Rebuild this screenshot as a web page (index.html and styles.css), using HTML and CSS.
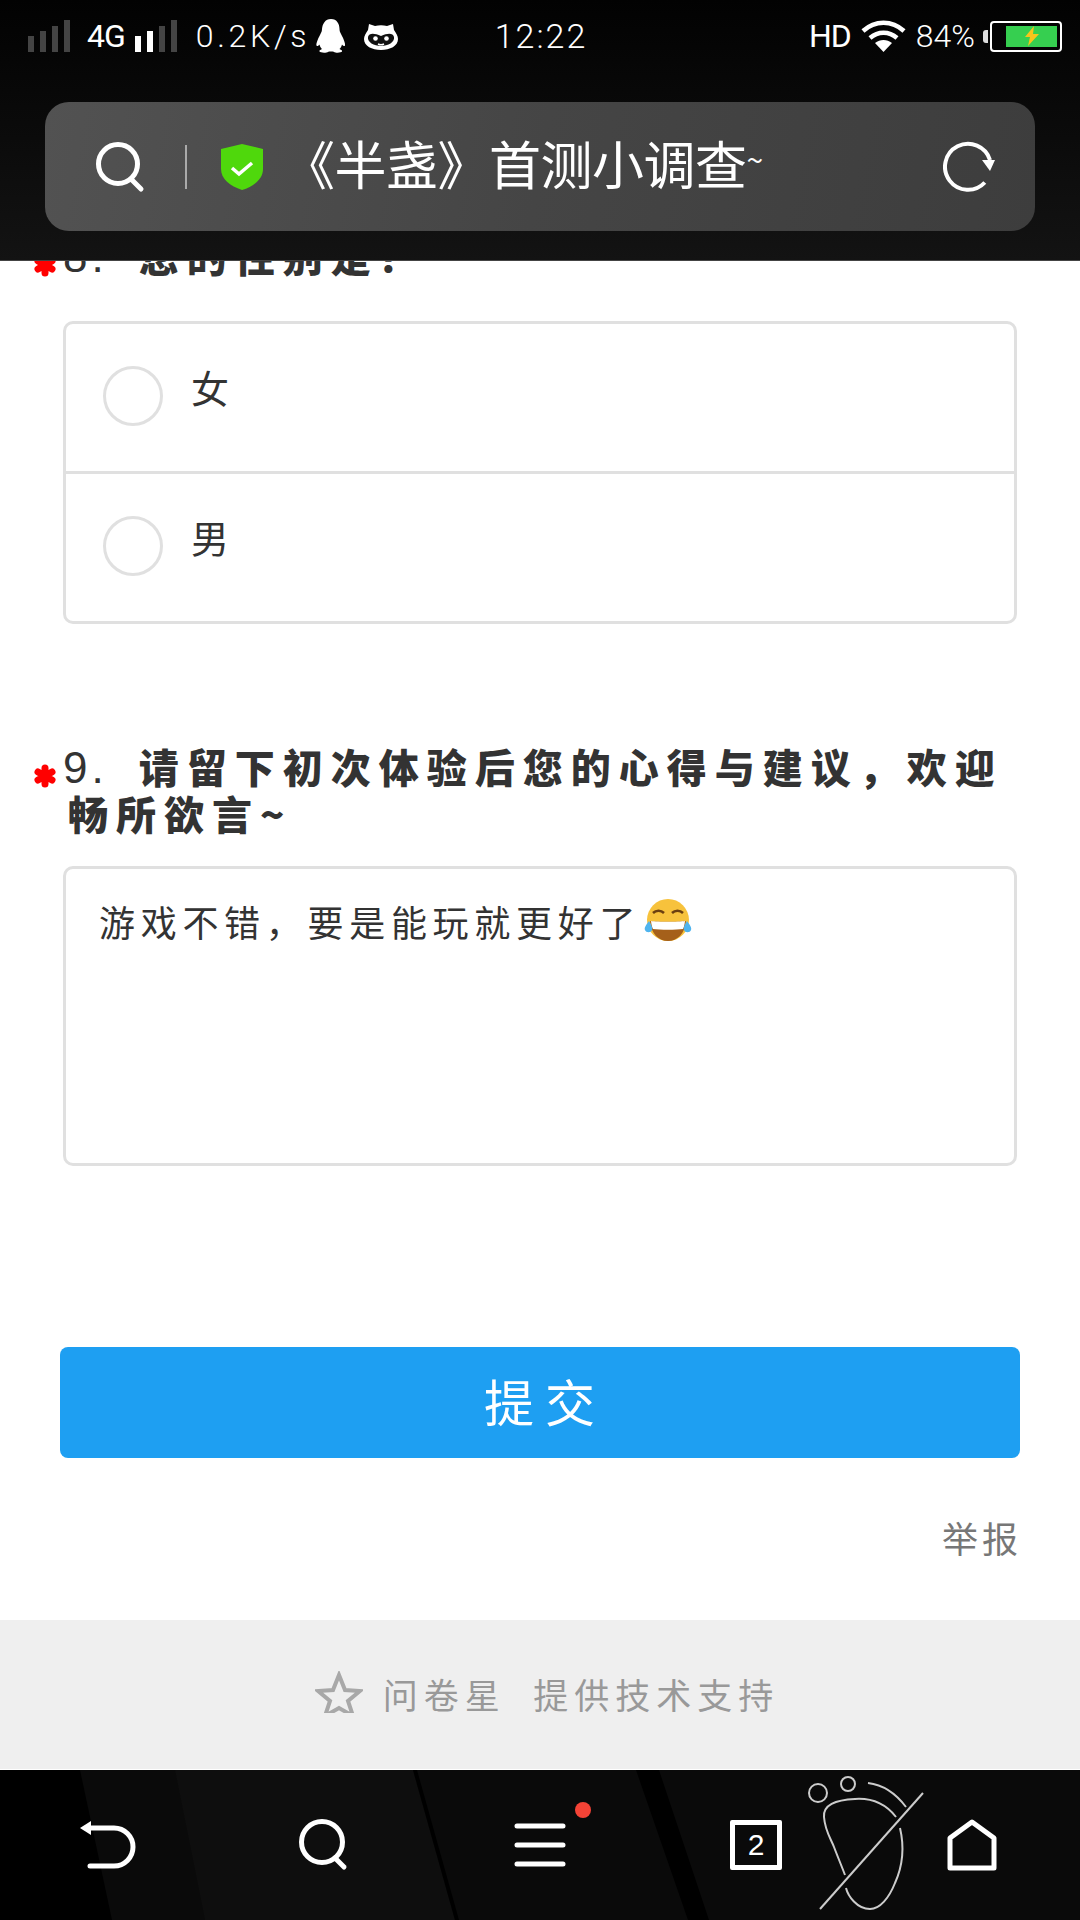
FILE: index.html
```html
<!DOCTYPE html>
<html>
  <head>
    <title>《半盏》首测小调查~</title>
    <meta charset="UTF-8" />
    <link rel="stylesheet" href="styles.css">
  </head>
  <body>
    <div class="page">
      <header class="top">
        <div class="status">
          <div class="status-left">
            <svg class="signal" width="43" height="32" viewBox="0 0 43 32"><path fill="#444" d="M0 16h6v16H0zM12 11h6v21h-6zM24 6h6v26h-6zM36 0h6v32h-6z"/></svg>
            <span class="net">4G</span>
            <svg class="signal" width="43" height="32" viewBox="0 0 43 32"><path fill="#fff" d="M0 16h6v16H0zM12 11h6v21h-6z"/><path fill="#444" d="M24 6h6v26h-6zM36 0h6v32h-6z"/></svg>
            <span class="speed">0.2K/s</span>
            <svg width="30" height="34" viewBox="0 0 30 34"><path fill="#fff" d="M15 0c6 0 8.500 5 8.500 10 0 2 .5 3 2 6 2.500 4.500 4 9 3.500 10.500-.5 1-2 .5-3-1-.5 2-1.500 3.500-2.500 4.500 2 1 3 1.500 2.500 2.500-.5 1-4 1.500-6.500 1-1.500-.5-2-1-4.500-1s-3 .5-4.500 1C7.500 34 4 33.500 3.500 32.500 3 31.500 4 31 6 30c-1-1-2-2.500-2.500-4.500-1 1.500-2.500 2-3 1-.5-1.500 1-6 3.500-10.500 1.500-3 2-4 2-6C6.500 5 9 0 15 0z"/></svg>
            <svg class="cat" width="34" height="30" viewBox="0 0 34 30"><path fill="#fff" d="M5 3l6 2c4-1 8-1 12 0l6-2 1 6c2 3 4 6 4 9 0 7-8 11-17 11S0 25 0 18c0-3 2-6 4-9z"/><path fill="#111" d="M4 16c1-4 6-4 13-1 7-3 12-3 13 1 1 5-6 9-13 9S3 21 4 16z"/><circle cx="11.500" cy="17.500" r="2.300" fill="#fff"/><circle cx="22.500" cy="17.500" r="2.300" fill="#fff"/><path d="M14 23c2 1 4 1 6 0" stroke="#fff" stroke-width="1.500" fill="none"/></svg>
          </div>
          <div class="clock">12:22</div>
          <div class="status-right">
            <span class="net">HD</span>
            <svg width="45" height="32" viewBox="0 0 45 32"><g fill="none" stroke="#fff" stroke-width="4.500"><path d="M2 11c12-11 29-11 41 0"/><path d="M9 18c8-7 19-7 27 0"/></g><path fill="#fff" d="M14 23c5-4 12-4 17 0l-8.500 9z"/></svg>
            <span class="percent">84%</span>
            <div class="battery">
              <div class="battery-fill">
                <svg width="16" height="20" viewBox="0 0 16 20"><path fill="#f7c51b" d="M10 0L1 11h5l-2 9 11-12H9z"/></svg>
              </div>
            </div>
          </div>
        </div>
        <div class="address">
          <svg width="50" height="52" viewBox="0 0 50 52"><circle cx="23" cy="23" r="19.500" fill="none" stroke="#fff" stroke-width="5"/><path d="M36 38l10 10" stroke="#fff" stroke-width="5" stroke-linecap="round"/></svg>
          <div class="address-sep"></div>
          <svg class="shield" width="42" height="46" viewBox="0 0 42 46"><path fill="#4fd80c" d="M21 0l21 5v20c0 10-9 17-21 21C9 42 0 35 0 25V5z"/><path d="M11 24l7 6 13-11" fill="none" stroke="#fff" stroke-width="3.500"/></svg>
          <div class="address-title">《半盏》首测小调查<span class="tilde">~</span></div>
          <svg width="52" height="52" viewBox="0 0 52 52"><path d="M41.800 41.500A23 23 0 1 1 47 19" fill="none" stroke="#fff" stroke-width="4"/><path d="M39 19h13l-5 11z" fill="#fff"/></svg>
        </div>
      </header>

      <main class="content">
        <section class="question q8">
          <div class="q-title">
            <svg class="req" width="24" height="24" viewBox="0 0 24 24"><g stroke="#f00" stroke-width="7" stroke-linecap="round"><path d="M12 4v16M5 8l14 8M19 8L5 16"/></g></svg>
            <h2><span class="q-num">8.</span>&nbsp;您的性别是？</h2>
          </div>
          <div class="options">
            <div class="option"><span class="radio"></span><span class="option-text">女</span></div>
            <div class="option"><span class="radio"></span><span class="option-text">男</span></div>
          </div>
        </section>

        <section class="question q9">
          <div class="q-title">
            <svg class="req" width="24" height="24" viewBox="0 0 24 24"><g stroke="#f00" stroke-width="7" stroke-linecap="round"><path d="M12 4v16M5 8l14 8M19 8L5 16"/></g></svg>
            <h2><span class="q-num">9.</span>&nbsp;请留下初次体验后您的心得与建议，欢迎畅所欲言~</h2>
          </div>
          <div class="answer">
            <span>游戏不错，要是能玩就更好了</span>
            <svg class="emoji" width="48" height="46" viewBox="0 0 48 46">
              <circle cx="24" cy="23" r="21" fill="#f7c23c"/>
              <path d="M6 24c5 1 31 1 36 0-1 13-9 20-18 20S7 37 6 24z" fill="#a5601a"/>
              <path d="M7 24c6 1 28 1 34 0-.5 4-1 6-2 8-7 1-23 1-30 0-1-2-1.500-4-2-8z" fill="#fff"/>
              <path d="M9 16c3-3 8-3 11 0M28 16c3-3 8-3 11 0" fill="none" stroke="#6b3f10" stroke-width="2.500"/>
              <path d="M5 24c-3 4-5 7-4 9 1 3 6 3 7 0 1-2-1-6-3-9zM43 24c3 4 5 7 4 9-1 3-6 3-7 0-1-2 1-6 3-9z" fill="#4fb4ee"/>
            </svg>
          </div>
        </section>

        <button class="submit" type="button">提交</button>
        <div class="report"><a>举报</a></div>

        <div class="support">
          <div class="star-clip">
            <svg width="48" height="46" viewBox="0 0 48 46"><path d="M24 4l6 15 15 1-12 10 5 15-14-8-14 8 5-15L3 20l15-1z" fill="none" stroke="#a8a8a8" stroke-width="4"/></svg>
          </div>
          <span>问卷星&nbsp;&nbsp;提供技术支持</span>
        </div>
      </main>

      <nav class="bottom">
        <svg class="bottom-bg" width="1080" height="150" viewBox="0 0 1080 150">
          <path fill="#000" d="M0 0h80l32 150H0z"/>
          <path fill="#0e0e0e" d="M175 0h238l42 150H205z"/>
          <path fill="#000" d="M413 0h4l42 150h-4zM636 0h23l50 150h-21z"/>
        </svg>
        <div class="nav-item">
          <svg width="56" height="50" viewBox="0 0 56 50"><path d="M8 8h26a19 19 0 0 1 0 38H10" fill="none" stroke="#fff" stroke-width="5" stroke-linecap="round"/><path d="M0 8l11-7v14z" fill="#fff"/></svg>
        </div>
        <div class="nav-item">
          <svg width="50" height="52" viewBox="0 0 50 52"><circle cx="23" cy="23" r="20.500" fill="none" stroke="#fff" stroke-width="5"/><path d="M36 39l9 9" stroke="#fff" stroke-width="5" stroke-linecap="round"/></svg>
        </div>
        <div class="nav-item menu">
          <svg width="52" height="44" viewBox="0 0 52 44"><path d="M3 3h46M3 22h46M3 41h46" stroke="#fff" stroke-width="5" stroke-linecap="round"/></svg>
          <span class="dot"></span>
        </div>
        <div class="nav-item"><div class="tabs">2</div></div>
        <div class="nav-item">
          <svg width="50" height="52" viewBox="0 0 50 52"><path d="M25 3L47 19V49H3V19z" fill="none" stroke="#fff" stroke-width="5" stroke-linejoin="round"/></svg>
        </div>
        <svg class="foot" width="140" height="150" viewBox="0 0 140 150">
          <g fill="none" stroke="#ccc" stroke-width="2">
            <circle cx="18" cy="23" r="9"/>
            <circle cx="48" cy="14" r="7"/>
            <path d="M68 13c17 2 29 12 38 24"/>
            <path d="M96 47C85 33 70 28 55 29 35 30 23 35 24 47c1 14 7 22 10 30 3 8 8 20 11 28"/>
            <path d="M100 58c4 17 4 35-5 55-6 15-15 26-25 26-13 0-22-13-24-21"/>
            <path d="M123 23L20 139"/>
          </g>
        </svg>
      </nav>
    </div>
  </body>
</html>
```

FILE: styles.css
```css
* {
  box-sizing: border-box;
}

body {
  margin: 0;
  font-family: "Noto Sans CJK SC", "Liberation Sans", sans-serif;
  color: #333;
  background: #fff;
}

.page {
  display: flex;
  flex-direction: column;
  width: 1080px;
  height: 1920px;
  overflow: hidden;
}

/* barra superior */
.top {
  flex: none;
  height: 261px;
  padding-top: 16px;
  background: linear-gradient(#020202, #131313);
  border-bottom: 1px solid #444;
}

.status {
  display: grid;
  grid-template-columns: 1fr auto 1fr;
  align-items: center;
  height: 36px;
  padding: 0 18px 0 28px;
  color: #fff;
  font-family: Roboto, "Liberation Sans", sans-serif;
}

.status-left,
.status-right {
  display: flex;
  align-items: center;
  gap: 10px;
}

.status-right {
  justify-content: flex-end;
}

.net {
  font-size: 32px;
  letter-spacing: -1px;
  margin-left: 6px;
}

.speed {
  margin: 0 -4px 0 8px;
  font-size: 32px;
  font-weight: 300;
  letter-spacing: 3.7px;
}

.cat {
  margin-left: 8px;
}

.clock {
  margin-left: -8px;
  font-size: 34px;
  font-weight: 300;
  letter-spacing: 2px;
}

.percent {
  font-size: 32px;
  font-weight: 300;
}

.battery {
  position: relative;
  width: 72px;
  height: 31px;
  padding: 3px;
  margin-left: 5px;
  border: 2px solid #fff;
  border-radius: 4px;
}

.battery::before {
  content: "";
  position: absolute;
  left: -9px;
  top: 7px;
  width: 5px;
  height: 13px;
  background: #ddd;
  border-radius: 3px 0 0 3px;
}

.battery-fill {
  display: flex;
  align-items: center;
  justify-content: center;
  height: 100%;
  margin-left: 11px;
  background: #36cf50;
}

.address {
  display: flex;
  align-items: center;
  width: 990px;
  height: 129px;
  margin: 50px 0 0 45px;
  padding: 0 40px 0 50px;
  background: linear-gradient(100deg, #525252, #454545 50%, #3d3d3d);
  border-radius: 24px;
}

.address-sep {
  width: 2px;
  height: 44px;
  margin: 0 34px 0 40px;
  background: #aaa;
}

.address-title {
  flex: 1;
  margin: -8px 0 0 20px;
  color: #fff;
  font-size: 52px;
  letter-spacing: -0.5px;
  white-space: nowrap;
}

.tilde {
  position: relative;
  top: -14px;
  font-size: 30px;
}

/* encuesta */
.content {
  flex: 1;
  overflow: hidden;
}

.question {
  padding: 0 63px 0 33px;
}

.q-title {
  display: flex;
  align-items: flex-start;
}

.req {
  flex: none;
  margin: 21px 6px 0 0;
}

.q-title h2 {
  margin: 0;
  padding-left: 5px;
  font-size: 40px;
  font-weight: 900;
  line-height: 47px;
  letter-spacing: 8px;
  color: #333;
}

.q-num {
  margin: 0 14px 0 -5px;
  font-family: "Liberation Sans", sans-serif;
  font-weight: 400;
  font-size: 44px;
  line-height: 0;
  letter-spacing: 4px;
}

.q8 {
  margin-top: -29px;
}

.options {
  margin: 42px 0 0 30px;
  border: 3px solid #e0e0e0;
  border-radius: 10px;
}

.option {
  display: flex;
  height: 147px;
  padding: 42px 0 0 37px;
}

.option + .option {
  height: 150px;
  border-top: 3px solid #e0e0e0;
}

.radio {
  width: 60px;
  height: 60px;
  border: 3px solid #e0e0e0;
  border-radius: 50%;
}

.option-text {
  margin: -4px 0 0 28px;
  font-size: 38px;
  line-height: 50px;
}

.q9 {
  margin-top: 119px;
}

.answer {
  display: flex;
  align-items: flex-start;
  height: 300px;
  margin: 29px 0 0 30px;
  padding: 0 0 0 33px;
  border: 3px solid #e0e0e0;
  border-radius: 10px;
  font-size: 36px;
  letter-spacing: 5.7px;
  line-height: 50px;
}

.answer span {
  margin-top: 27px;
}

.emoji {
  margin: 28px 0 0 3px;
}

.submit {
  display: block;
  width: 960px;
  height: 111px;
  margin: 181px 0 0 60px;
  padding: 0 0 6px 10px;
  color: #fff;
  background: #1e9ff2;
  border: none;
  border-radius: 8px;
  font-family: inherit;
  font-size: 50px;
  letter-spacing: 11px;
}

.report {
  height: 162px;
  padding: 54px 58px 0 0;
  text-align: right;
  color: #777;
  font-size: 36px;
  letter-spacing: 4px;
  line-height: 50px;
}

.support {
  display: flex;
  align-items: center;
  justify-content: center;
  gap: 20px;
  height: 149px;
  padding: 0 0 3px 14px;
  background: #efefef;
  color: #999;
  font-size: 35px;
  letter-spacing: 6px;
}

.star-clip {
  height: 42px;
  margin-top: -3px;
  overflow: hidden;
  filter: blur(0.6px);
}

/* navegación inferior */
.bottom {
  position: relative;
  flex: none;
  display: grid;
  grid-template-columns: repeat(5, 1fr);
  align-items: center;
  height: 150px;
  background: #0a0a0a;
}

.bottom-bg {
  position: absolute;
  left: 0;
  top: 0;
}

.nav-item {
  position: relative;
  display: flex;
  justify-content: center;
}

.dot {
  position: absolute;
  left: 143px;
  top: -21px;
  width: 16px;
  height: 16px;
  background: #f44336;
  border-radius: 50%;
}

.tabs {
  width: 52px;
  height: 50px;
  border: 5px solid #fff;
  border-radius: 2px;
  color: #fff;
  font-family: "Liberation Sans", sans-serif;
  font-size: 30px;
  line-height: 40px;
  text-align: center;
}

.foot {
  position: absolute;
  left: 800px;
  top: 0;
}
```
